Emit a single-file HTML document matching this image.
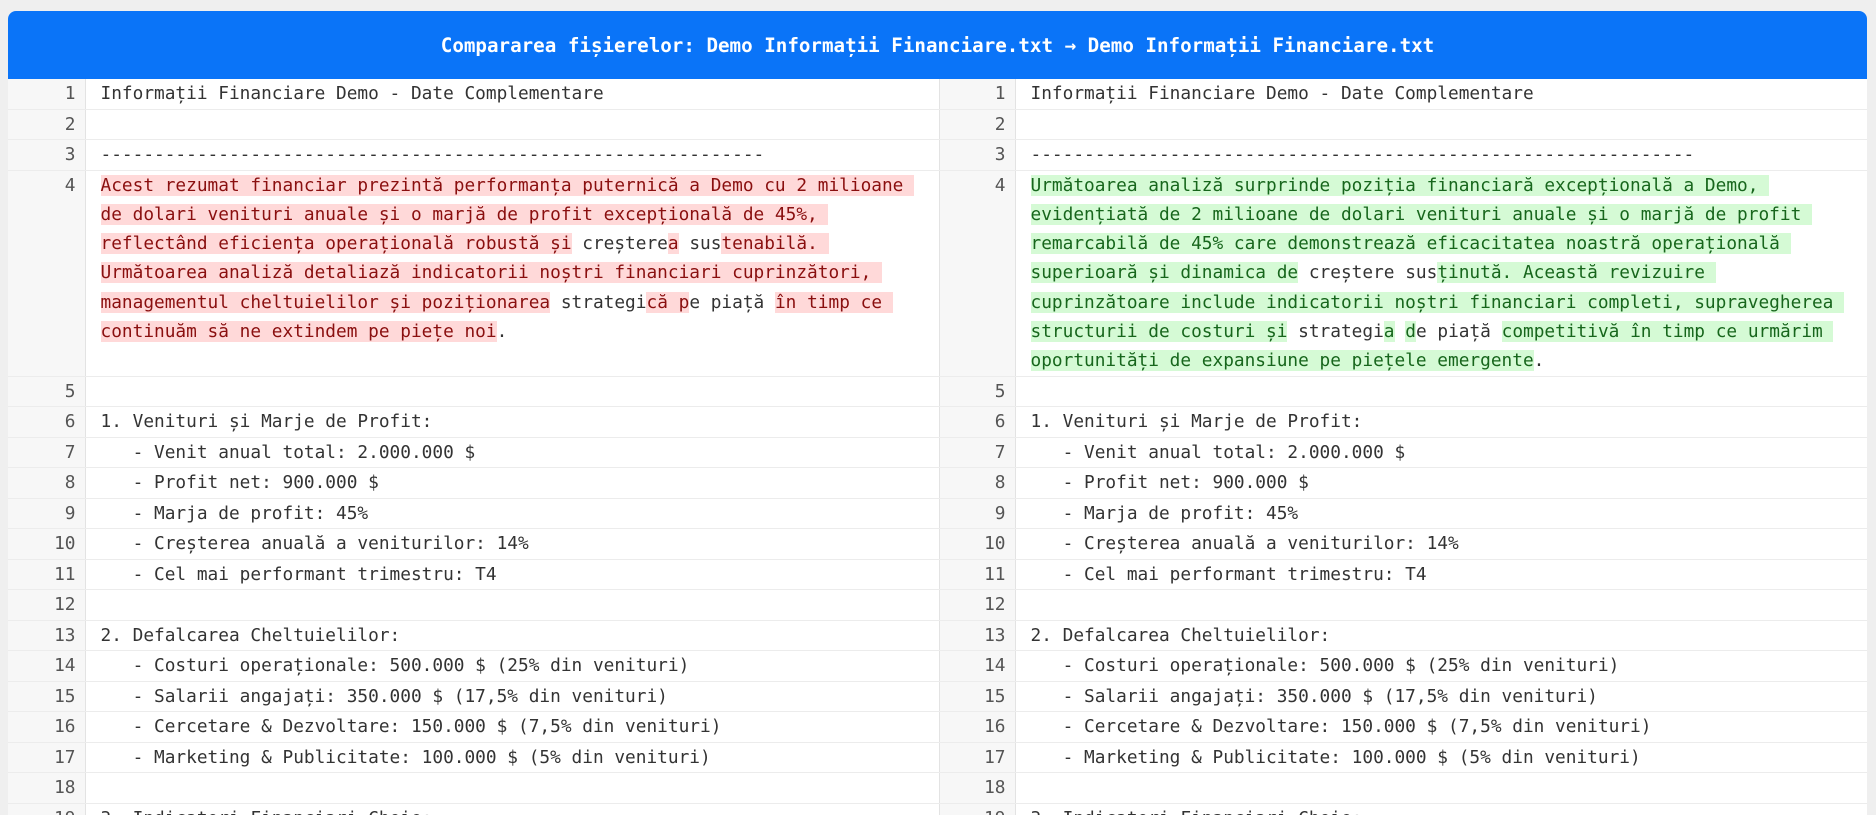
<!DOCTYPE html>
<html><head><meta charset="utf-8"><style>
html,body{margin:0;padding:0;background:#efefef;width:1876px;height:815px;overflow:hidden}
.card{position:absolute;left:8px;top:11px;width:1859px;height:804px;background:#fff;border-radius:8px 8px 0 0;overflow:hidden}
.hdr{height:68px;background:#0a74f8;color:#fff;font:bold 19.2px "DejaVu Sans Mono","Liberation Mono",monospace;display:flex;align-items:center;justify-content:center}
table{border-collapse:collapse;table-layout:fixed;width:1859px;font:17.8px "DejaVu Sans Mono","Liberation Mono",monospace;color:#333}
td{border-bottom:1px solid #ececec;vertical-align:top;line-height:29.5px;padding:0;white-space:pre}
tr.w td{line-height:29.3px}
td.n{background:#f7f7f7;border-right:1px solid #e3e3e3;text-align:right;padding-right:9px;color:#555;box-sizing:border-box}
td.t{padding-left:15px}
td.l{border-right:1px solid #e3e3e3}
.r{background:#ffd9d9;color:#8a0f0f}
.g{background:#d5fad5;color:#17661c}
</style></head><body>
<div class="card">
<div class="hdr">Compararea fișierelor: Demo Informații Financiare.txt → Demo Informații Financiare.txt</div>
<table>
<colgroup><col style="width:77px"><col style="width:854px"><col style="width:76px"><col style="width:852px"></colgroup>
<tr><td class="n">1</td><td class="t l">Informații Financiare Demo - Date Complementare</td><td class="n">1</td><td class="t">Informații Financiare Demo - Date Complementare</td></tr>
<tr><td class="n">2</td><td class="t l"></td><td class="n">2</td><td class="t"></td></tr>
<tr><td class="n">3</td><td class="t l">--------------------------------------------------------------</td><td class="n">3</td><td class="t">--------------------------------------------------------------</td></tr>
<tr class="w"><td class="n">4</td><td class="t l"><span class="r">Acest rezumat financiar prezintă performanța puternică a Demo cu 2 milioane </span>
<span class="r">de dolari venituri anuale și o marjă de profit excepțională de 45%, </span>
<span class="r">reflectând eficiența operațională robustă și</span> creștere<span class="r">a</span> sus<span class="r">tenabilă. </span>
<span class="r">Următoarea analiză detaliază indicatorii noștri financiari cuprinzători, </span>
<span class="r">managementul cheltuielilor și poziționarea</span> strategi<span class="r">că p</span>e piață <span class="r">în timp ce </span>
<span class="r">continuăm să ne extindem pe piețe noi</span>.
</td><td class="n">4</td><td class="t"><span class="g">Următoarea analiză surprinde poziția financiară excepțională a Demo, </span>
<span class="g">evidențiată de 2 milioane de dolari venituri anuale și o marjă de profit </span>
<span class="g">remarcabilă de 45% care demonstrează eficacitatea noastră operațională </span>
<span class="g">superioară și dinamica de</span> creștere sus<span class="g">ținută. Această revizuire </span>
<span class="g">cuprinzătoare include indicatorii noștri financiari completi, supravegherea </span>
<span class="g">structurii de costuri și</span> strategi<span class="g">a</span> <span class="g">d</span>e piață <span class="g">competitivă în timp ce urmărim </span>
<span class="g">oportunități de expansiune pe piețele emergente</span>.</td></tr>
<tr><td class="n">5</td><td class="t l"></td><td class="n">5</td><td class="t"></td></tr>
<tr><td class="n">6</td><td class="t l">1. Venituri și Marje de Profit:</td><td class="n">6</td><td class="t">1. Venituri și Marje de Profit:</td></tr>
<tr><td class="n">7</td><td class="t l">   - Venit anual total: 2.000.000 $</td><td class="n">7</td><td class="t">   - Venit anual total: 2.000.000 $</td></tr>
<tr><td class="n">8</td><td class="t l">   - Profit net: 900.000 $</td><td class="n">8</td><td class="t">   - Profit net: 900.000 $</td></tr>
<tr><td class="n">9</td><td class="t l">   - Marja de profit: 45%</td><td class="n">9</td><td class="t">   - Marja de profit: 45%</td></tr>
<tr><td class="n">10</td><td class="t l">   - Creșterea anuală a veniturilor: 14%</td><td class="n">10</td><td class="t">   - Creșterea anuală a veniturilor: 14%</td></tr>
<tr><td class="n">11</td><td class="t l">   - Cel mai performant trimestru: T4</td><td class="n">11</td><td class="t">   - Cel mai performant trimestru: T4</td></tr>
<tr><td class="n">12</td><td class="t l"></td><td class="n">12</td><td class="t"></td></tr>
<tr><td class="n">13</td><td class="t l">2. Defalcarea Cheltuielilor:</td><td class="n">13</td><td class="t">2. Defalcarea Cheltuielilor:</td></tr>
<tr><td class="n">14</td><td class="t l">   - Costuri operaționale: 500.000 $ (25% din venituri)</td><td class="n">14</td><td class="t">   - Costuri operaționale: 500.000 $ (25% din venituri)</td></tr>
<tr><td class="n">15</td><td class="t l">   - Salarii angajați: 350.000 $ (17,5% din venituri)</td><td class="n">15</td><td class="t">   - Salarii angajați: 350.000 $ (17,5% din venituri)</td></tr>
<tr><td class="n">16</td><td class="t l">   - Cercetare &amp; Dezvoltare: 150.000 $ (7,5% din venituri)</td><td class="n">16</td><td class="t">   - Cercetare &amp; Dezvoltare: 150.000 $ (7,5% din venituri)</td></tr>
<tr><td class="n">17</td><td class="t l">   - Marketing &amp; Publicitate: 100.000 $ (5% din venituri)</td><td class="n">17</td><td class="t">   - Marketing &amp; Publicitate: 100.000 $ (5% din venituri)</td></tr>
<tr><td class="n">18</td><td class="t l"></td><td class="n">18</td><td class="t"></td></tr>
<tr><td class="n">19</td><td class="t l">3. Indicatori Financiari Cheie:</td><td class="n">19</td><td class="t">3. Indicatori Financiari Cheie:</td></tr>
<tr><td class="n">20</td><td class="t l"></td><td class="n">20</td><td class="t"></td></tr>
</table>
</div>
</body></html>
